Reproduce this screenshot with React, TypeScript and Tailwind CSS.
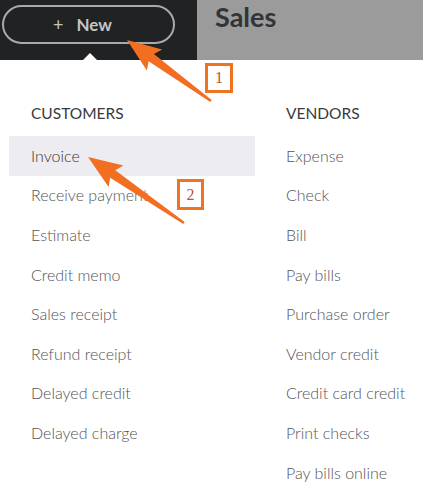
import React from 'react';

const customers = [
  'Invoice',
  'Receive payment',
  'Estimate',
  'Credit memo',
  'Sales receipt',
  'Refund receipt',
  'Delayed credit',
  'Delayed charge',
];

const vendors = [
  'Expense',
  'Check',
  'Bill',
  'Pay bills',
  'Purchase order',
  'Vendor credit',
  'Credit card credit',
  'Print checks',
  'Pay bills online',
];

// tapered callout arrow, tail -> tip
function arrowPoints(tail: [number, number], tip: [number, number]) {
  const [tx, ty] = tail;
  const [px, py] = tip;
  const dx = px - tx;
  const dy = py - ty;
  const len = Math.hypot(dx, dy);
  const ux = dx / len;
  const uy = dy / len;
  const nx = -uy;
  const ny = ux;
  const headLen = 30;
  const headW = 13;
  const bx = px - ux * headLen;
  const by = py - uy * headLen;
  const pts: [number, number][] = [
    [tx + nx * 1.2, ty + ny * 1.2],
    [bx + nx * 4.5, by + ny * 4.5],
    [bx + nx * headW - ux * 4, by + ny * headW - uy * 4],
    [px, py],
    [bx - nx * headW - ux * 4, by - ny * headW - uy * 4],
    [bx - nx * 4.5, by - ny * 4.5],
    [tx - nx * 1.2, ty - ny * 1.2],
  ];
  return pts.map((p) => p.join(',')).join(' ');
}

const MenuRow: React.FC<{ label: string; active?: boolean }> = ({ label, active }) => (
  <div className={`h-[39.6px] flex items-center pl-[22px] ${active ? 'bg-[#ececf1] text-[#36373a]' : 'text-[#535458]'}`}>
    {label}
  </div>
);

export default function App() {
  return (
    <div className="relative w-[423px] h-[496px] overflow-hidden bg-white font-['Lato',sans-serif]">
      <div className="flex h-[60px]">
        <div className="w-[197px] bg-[#212223] pt-[5px] pl-[2px]">
          <div className="w-[173px] h-[39px] rounded-full border-2 border-[#a9aaab] flex items-center justify-center gap-[13px] text-[#c4c5c6] font-bold text-[17px] pr-[12px]">
            <span className="font-normal text-[18px]">+</span>
            <span>New</span>
          </div>
        </div>
        <div className="flex-1 bg-[#9b9b9b] pl-[18px]">
          <span className="text-[27px] leading-[34px] font-bold text-[#333436]">Sales</span>
        </div>
      </div>

      <div className="absolute left-[83px] top-[53px] w-0 h-0 border-l-[7px] border-r-[7px] border-b-[7px] border-l-transparent border-r-transparent border-b-white" />

      <div className="grid grid-cols-[286px_1fr] pt-[43px] text-[16px] font-light">
        <div className="pl-[9px]">
          <div className="h-[20px] leading-[20px] pl-[22px] text-[15.5px] font-normal text-[#393a3d] mb-[13px]">CUSTOMERS</div>
          <div className="w-[246px]">
            {customers.map((c, i) => (
              <MenuRow key={c} label={c} active={i === 0} />
            ))}
          </div>
        </div>
        <div>
          <div className="h-[20px] leading-[20px] text-[15.5px] font-normal text-[#393a3d] mb-[13px]">VENDORS</div>
          {vendors.map((v) => (
            <div key={v} className="h-[39.6px] flex items-center text-[#535458]">
              {v}
            </div>
          ))}
        </div>
      </div>

      <svg className="absolute inset-0 pointer-events-none" width="423" height="496">
        <polygon points={arrowPoints([211, 101], [127, 40])} fill="#f26f21" />
        <polygon points={arrowPoints([184, 223], [88, 157])} fill="#f26f21" />
      </svg>

      <div className="absolute left-[205px] top-[63px] w-[28px] h-[30px] border-[3px] border-[#ee7424] bg-white flex items-center justify-center font-['Liberation_Serif',serif] text-[16px] text-[#b8581e]">
        1
      </div>
      <div className="absolute left-[177px] top-[179px] w-[27px] h-[31px] border-[3px] border-[#ee7424] bg-white flex items-center justify-center font-['Liberation_Serif',serif] text-[16px] text-[#b8581e]">
        2
      </div>
    </div>
  );
}
